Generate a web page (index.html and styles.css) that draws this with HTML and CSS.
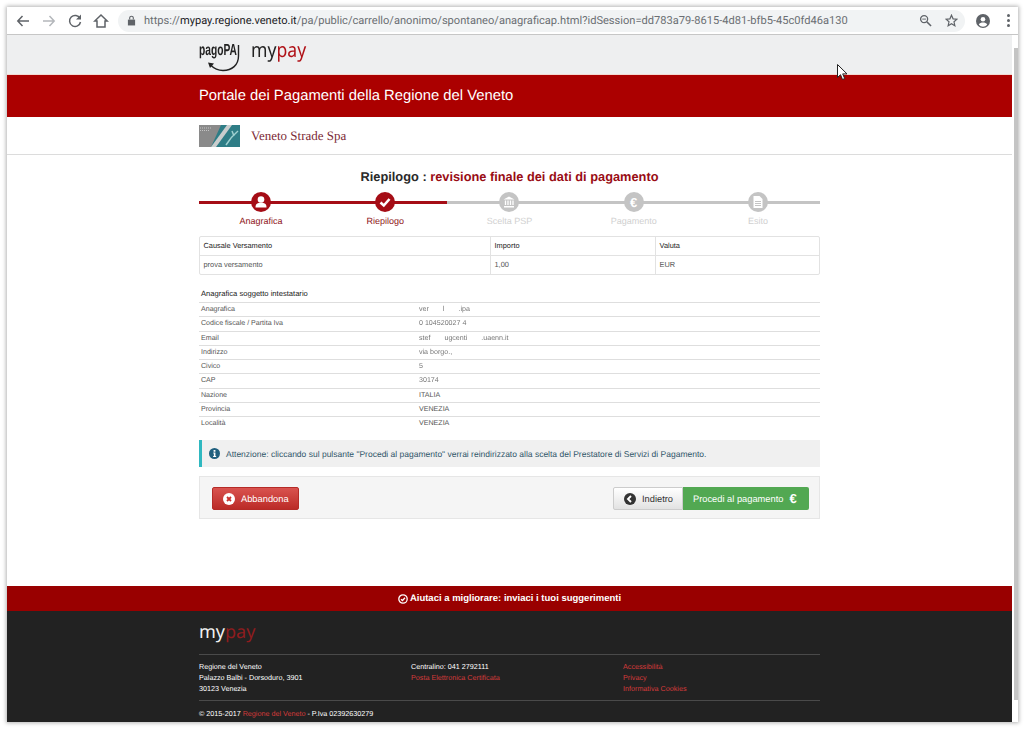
FILE: index.html
```html
<!DOCTYPE html>
<html lang="it">
<head>
  <meta charset="UTF-8">
  <meta name="viewport" content="width=device-width,initial-scale=1.0">
  <title>MyPay - Riepilogo</title>
  <link rel="stylesheet" href="styles.css">
</head>
<body>

<div class="window">

  <!-- barra del browser -->
  <div class="toolbar">
    <svg class="tb-icon" viewBox="0 0 16 16"><path d="M14 8H3M7.500 3 2.800 8l4.700 5" fill="none" stroke="#5f6368" stroke-width="1.500"/></svg>
    <svg class="tb-icon" viewBox="0 0 16 16"><path d="M2 8h11M8.500 3l4.700 5-4.700 5" fill="none" stroke="#b4b7bb" stroke-width="1.500"/></svg>
    <svg class="tb-icon" viewBox="0 0 16 16"><path d="M13 5.500A5.500 5.500 0 1 0 13.500 9" fill="none" stroke="#5f6368" stroke-width="1.500"/><path d="M14 1.500v5H9z" fill="#5f6368"/></svg>
    <svg class="tb-icon" viewBox="0 0 16 16"><path d="M8 2 1.800 8H4v6h8V8h2.200z" fill="none" stroke="#5f6368" stroke-width="1.500"/></svg>
    <div class="omnibox">
      <svg class="lock" viewBox="0 0 10 12"><path d="M1 5h8v6.500H1z" fill="#5f6368"/><path d="M3 5V3.200a2 2 0 0 1 4 0V5" fill="none" stroke="#5f6368" stroke-width="1.200"/></svg>
      <div class="url">https://<b>mypay.regione.veneto.it</b>/pa/public/carrello/anonimo/spontaneo/anagraficap.html?idSession=dd783a79-8615-4d81-bfb5-45c0fd46a130</div>
      <svg class="om-icon" viewBox="0 0 14 14"><circle cx="5.500" cy="5.500" r="3.800" fill="none" stroke="#5f6368" stroke-width="1.400"/><path d="M8.500 8.500 13 13" stroke="#5f6368" stroke-width="1.600"/><path d="M3.500 5.500h4" stroke="#5f6368"/></svg>
      <svg class="om-icon star" viewBox="0 0 14 14"><path d="M7 1.300 8.700 5.200l4.200.4-3.200 2.800.9 4.200L7 10.400l-3.600 2.200.9-4.200L1.100 5.600l4.200-.4z" fill="none" stroke="#5f6368" stroke-width="1.300"/></svg>
    </div>
    <svg class="avatar" viewBox="0 0 14 14"><circle cx="7" cy="7" r="7" fill="#5f6368"/><circle cx="7" cy="5.200" r="2.300" fill="#fff"/><path d="M2.800 10.800C3.500 9 5.500 8.600 7 8.600s3.500.4 4.200 2.200A5.600 5.600 0 0 1 7 12.700a5.600 5.600 0 0 1-4.200-1.900z" fill="#fff"/></svg>
    <div class="dots"><i></i><i></i><i></i></div>
  </div>

  <div class="viewport">
    <div class="page">

      <header class="logo-band">
        <div class="wrap logo-row">
          <div class="logo-pagopa">
            <span class="pagopa-text">pagoPA</span>
            <svg class="pagopa-arc" viewBox="0 0 42 31">
              <path d="M11.500 24C15 27.500 19 29.500 24 29.500C33 29.500 39.500 24 39.500 15V4" fill="none" stroke="#222" stroke-width="1.400"/>
              <path d="M9 21.500 15 22.500 11 27z" fill="#222"/>
            </svg>
          </div>
          <div class="logo-mypay"><span class="my">my</span><span class="pay">pay</span></div>
        </div>
      </header>

      <div class="title-band">
        <div class="wrap">Portale dei Pagamenti della Regione del Veneto</div>
      </div>

      <div class="ente-band">
        <div class="wrap ente-row">
          <svg class="ente-logo" viewBox="0 0 41 22">
            <rect width="41" height="22" fill="#8a8a8a"/>
            <path d="M22 0h19v22H12z" fill="#2e7d86"/>
            <path d="M12 22 28 0h5L17 22z" fill="#c9cdcd"/>
            <path d="M1 3h11M1 5.500h9" stroke="#c4c4c4" stroke-width="1" stroke-dasharray="1 1"/>
            <path d="M27 20c3-5 6-9 12-14M33 6l2 5" stroke="#9fd0d0" stroke-width="1.500" fill="none"/>
          </svg>
          <span class="ente-name">Veneto Strade Spa</span>
        </div>
      </div>

      <main class="main">
        <div class="wrap">

          <h2 class="page-title">Riepilogo : <span>revisione finale dei dati di pagamento</span></h2>

          <div class="steps">
            <div class="step done">
              <span class="step-dot">
                <svg viewBox="0 0 20 20"><circle cx="10" cy="7.500" r="3.300" fill="#fff"/><path d="M4.500 15.500c0-4 2-4.800 5.500-4.800s5.500.8 5.500 4.800z" fill="#fff"/></svg>
              </span>
              <div class="step-label">Anagrafica</div>
            </div>
            <div class="step done">
              <span class="step-dot">
                <svg viewBox="0 0 20 20"><path d="M5.500 10.500 8.800 13.500 14.500 7" fill="none" stroke="#fff" stroke-width="2.600"/></svg>
              </span>
              <div class="step-label">Riepilogo</div>
            </div>
            <div class="step">
              <span class="step-dot">
                <svg viewBox="0 0 20 20"><path d="M10 4.500 15.500 7.500h-11zM5 14h10v1.500H5z" fill="#fff"/><path d="M6.500 8.500v4.500M9 8.500v4.500M11.500 8.500v4.500M14 8.500v4.500" stroke="#fff" stroke-width="1.300"/></svg>
              </span>
              <div class="step-label">Scelta PSP</div>
            </div>
            <div class="step">
              <span class="step-dot euro">€</span>
              <div class="step-label">Pagamento</div>
            </div>
            <div class="step">
              <span class="step-dot">
                <svg viewBox="0 0 20 20"><path d="M5.500 4h6l3 3v9h-9z" fill="#fff"/><path d="M7 9.500h6M7 11.500h6M7 13.500h6" stroke="#c4c4c4"/></svg>
              </span>
              <div class="step-label">Esito</div>
            </div>
          </div>

          <table class="cart">
            <tr>
              <th class="col-causale">Causale Versamento</th>
              <th class="col-importo">Importo</th>
              <th>Valuta</th>
            </tr>
            <tr>
              <td>prova versamento</td>
              <td>1,00</td>
              <td>EUR</td>
            </tr>
          </table>

          <h3 class="section-title">Anagrafica soggetto intestatario</h3>
          <div class="data-rows">
            <div class="data-row"><span>Anagrafica</span><span class="redact">ver<em></em>l<em></em>.ipa</span></div>
            <div class="data-row"><span>Codice fiscale / Partita Iva</span><span class="redact">0 104520027 4</span></div>
            <div class="data-row"><span>Email</span><span class="redact">stef<em></em>ugcenti<em></em>.uaenn.it</span></div>
            <div class="data-row"><span>Indirizzo</span><span class="redact">via borgo.,</span></div>
            <div class="data-row"><span>Civico</span><span class="redact">5</span></div>
            <div class="data-row"><span>CAP</span><span class="redact">30174</span></div>
            <div class="data-row"><span>Nazione</span><span>ITALIA</span></div>
            <div class="data-row"><span>Provincia</span><span>VENEZIA</span></div>
            <div class="data-row"><span>Località</span><span>VENEZIA</span></div>
          </div>

          <div class="alert">
            <svg class="alert-icon" viewBox="0 0 12 12"><circle cx="6" cy="6" r="6" fill="#1f5f7e"/><path d="M5 2.300h2v1.800H5zM4.600 5h2.400v3.700h.8v1H4.500v-1h.8V6h-.7z" fill="#fff"/></svg>
            <span>Attenzione: cliccando sul pulsante "Procedi al pagamento" verrai reindirizzato alla scelta del Prestatore di Servizi di Pagamento.</span>
          </div>

          <div class="actions">
            <a class="btn btn-danger">
              <svg viewBox="0 0 12 12"><circle cx="6" cy="6" r="6" fill="#fff"/><path d="M4 4l4 4M8 4l-4 4" stroke="#c9302c" stroke-width="1.800"/></svg>
              Abbandona
            </a>
            <div class="btn-group">
              <a class="btn btn-default">
                <svg viewBox="0 0 12 12"><circle cx="6" cy="6" r="6" fill="#333"/><path d="M7 3 4 6l3 3" fill="none" stroke="#fff" stroke-width="1.900"/></svg>
                Indietro
              </a>
              <a class="btn btn-success">Procedi al pagamento <span class="btn-euro">€</span></a>
            </div>
          </div>

        </div>
      </main>

      <div class="feedback-band">
        <svg viewBox="0 0 10 10"><circle cx="5" cy="5" r="4.200" fill="none" stroke="#fff" stroke-width="1.300"/><path d="M3 5.200 4.500 6.500 7 3.800" fill="none" stroke="#fff" stroke-width="1.300"/></svg>
        Aiutaci a migliorare: inviaci i tuoi suggerimenti
      </div>

      <footer class="footer">
        <div class="wrap">
          <div class="footer-logo"><span class="my">my</span><span class="pay">pay</span></div>
          <div class="footer-cols">
            <div>
              <div>Regione del Veneto</div>
              <div>Palazzo Balbi - Dorsoduro, 3901</div>
              <div>30123 Venezia</div>
            </div>
            <div>
              <div>Centralino: 041 2792111</div>
              <div><a>Posta Elettronica Certificata</a></div>
            </div>
            <div>
              <div><a>Accessibilità</a></div>
              <div><a>Privacy</a></div>
              <div><a>Informativa Cookies</a></div>
            </div>
          </div>
          <div class="footer-copy">© 2015-2017 <a>Regione del Veneto</a> - P.Iva 02392630279</div>
        </div>
      </footer>

    </div>
    <div class="scrollbar"></div>
  </div>
</div>

<svg class="cursor" viewBox="0 0 12 17"><path d="M.5.500v13l3-2.800 2 4.800 2.200-1-2-4.600h4.300z" fill="#fff" stroke="#222"/></svg>

</body>
</html>
```

FILE: styles.css
```css
html, body {
  margin: 0;
  height: 730px;
  overflow: hidden;
  background: #fff;
}
body {
  font-family: "Liberation Sans", Arial, sans-serif;
  color: #333;
  text-rendering: geometricPrecision;
}
.window {
  position: relative;
  margin: 7px 6px 0 7px;
  height: 715px;
  display: flex;
  flex-direction: column;
  box-shadow: 0 0 4px 1px #b4b4b4;
  background: #fff;
}

/* browser */
.toolbar {
  height: 27px;
  flex: none;
  display: flex;
  align-items: center;
  padding-left: 8px;
  background: #fff;
  border-bottom: 1px solid #c6c6c6;
}
.tb-icon {
  width: 16px;
  height: 16px;
  margin-right: 10px;
}
.omnibox {
  margin-left: -1px;
  width: 847px;
  height: 22px;
  border-radius: 11px;
  background: #f1f3f4;
  display: flex;
  align-items: center;
  padding-left: 9px;
  box-sizing: border-box;
}
.lock {
  width: 9px;
  height: 11px;
  margin-right: 8px;
}
.url {
  font-family: Roboto, sans-serif;
  font-size: 11.100px;
  color: #6b6f73;
  white-space: nowrap;
  width: 775px;
}
.url b {
  font-weight: normal;
  color: #202124;
}
.om-icon {
  width: 13px;
  height: 13px;
}
.star {
  margin-left: 13px;
}
.avatar {
  width: 14px;
  height: 14px;
  margin-left: 11px;
}
.dots {
  margin-left: 17px;
  display: flex;
  flex-direction: column;
  gap: 2px;
}
.dots i {
  width: 3px;
  height: 3px;
  border-radius: 50%;
  background: #5f6368;
}

.viewport {
  flex: 1;
  display: flex;
  min-height: 0;
}
.page {
  width: 1005px;
  display: flex;
  flex-direction: column;
}
.scrollbar {
  width: 4px;
  margin: 13px 0 22px 2px;
  background: #c4c4c4;
}
.wrap {
  width: 621px;
  margin: 0 auto;
}

/* header */
.logo-band {
  height: 39px;
  background: #eeeff0;
  border-bottom: 1px solid #f3d9d2;
  flex: none;
}
.logo-row {
  display: flex;
  align-items: flex-start;
}
.logo-pagopa {
  position: relative;
  width: 42px;
  height: 36px;
}
.pagopa-text {
  display: inline-block;
  margin-top: 7px;
  font-weight: bold;
  font-size: 16px;
  line-height: 18px;
  color: #222;
  transform: scaleX(0.640);
  transform-origin: left;
}
.pagopa-arc {
  position: absolute;
  left: 0;
  top: 6px;
  width: 42px;
  height: 31px;
}
.logo-mypay, .footer-logo {
  font-family: "Noto Sans", sans-serif;
}
.logo-mypay {
  margin-left: 10px;
  padding-top: 1px;
  font-size: 20px;
  line-height: 27px;
  transform: scaleX(0.880);
  transform-origin: left;
  white-space: nowrap;
}
.logo-mypay .my { color: #222; }
.logo-mypay .pay { color: #b01218; }

.title-band {
  height: 42px;
  flex: none;
  background: #ab0000;
  color: #fff;
  font-size: 14.800px;
  line-height: 42px;
}
.ente-band {
  height: 37px;
  flex: none;
  background: #fff;
  border-bottom: 1px solid #dcdcdc;
}
.ente-row {
  display: flex;
  align-items: center;
  height: 37px;
}
.ente-logo {
  width: 41px;
  height: 22px;
}
.ente-name {
  margin-left: 11px;
  font-family: "Liberation Serif", serif;
  font-size: 13px;
  color: #7c2a36;
}

/* contenuto */
.main {
  flex: 1;
  background: #fff;
}
.page-title {
  margin: 12px 0 5px;
  font-size: 12.800px;
  line-height: 20px;
  font-weight: bold;
  text-align: center;
  color: #2a2a2a;
}
.page-title span {
  color: #990d15;
}
.steps {
  display: grid;
  grid-template-columns: repeat(5, 1fr);
  background: linear-gradient(to right, #a50d16 40%, #c4c4c4 40%) 0 9px / 100% 3px no-repeat;
}
.step {
  display: flex;
  flex-direction: column;
  align-items: center;
}
.step-dot {
  width: 20px;
  height: 20px;
  border-radius: 50%;
  background: #c4c4c4;
  display: flex;
  align-items: center;
  justify-content: center;
  color: #fff;
}
.step-dot svg {
  width: 20px;
  height: 20px;
}
.euro {
  font-size: 13px;
  font-weight: bold;
}
.step-label {
  margin-top: 3px;
  font-size: 9px;
  line-height: 13px;
  text-align: center;
  color: #d0d0d0;
}
.step.done .step-dot {
  background: #a50d16;
}
.step.done .step-label {
  color: #8f1620;
}

.cart {
  width: 100%;
  margin-top: 8px;
  border-collapse: separate;
  border-spacing: 0;
  border: 1px solid #e2e2e2;
  border-radius: 2px;
  font-size: 7.400px;
}
.cart th, .cart td {
  text-align: left;
  font-weight: normal;
  vertical-align: top;
  padding: 0 3.500px;
  height: 18px;
  line-height: 17px;
}
.cart th {
  color: #222;
  border-bottom: 1px solid #e2e2e2;
}
.cart td {
  color: #555;
}
.cart th + th, .cart td + td {
  border-left: 1px solid #e2e2e2;
}
.col-causale { width: 283px; }
.col-importo { width: 157px; }

.section-title {
  margin: 13px 0 0;
  padding: 0 0 2px 2px;
  font-size: 7.600px;
  line-height: 12px;
  font-weight: normal;
  color: #222;
}
.data-row {
  height: 14.250px;
  box-sizing: border-box;
  border-top: 1px solid #dedede;
  display: grid;
  grid-template-columns: 218px 1fr;
  padding-left: 2px;
  font-size: 7.100px;
  line-height: 12px;
  color: #555;
}
.redact {
  color: #777;
  filter: blur(0.400px);
}
.redact em {
  display: inline-block;
  width: 14px;
}

.alert {
  margin-top: 10px;
  height: 27px;
  box-sizing: border-box;
  border-left: 3px solid #2fb8c0;
  background: #f0f0f0;
  display: flex;
  align-items: center;
  padding-left: 7px;
  font-size: 8.500px;
  color: #31566a;
}
.alert-icon {
  width: 11px;
  height: 11px;
  margin-right: 6px;
}

.actions {
  margin-top: 9px;
  height: 43px;
  box-sizing: border-box;
  background: #f5f5f5;
  border: 1px solid #e6e6e6;
  display: flex;
  justify-content: space-between;
  align-items: center;
  padding: 2px 10px 0 12px;
}
.btn-group {
  display: flex;
}
.btn {
  height: 23px;
  box-sizing: border-box;
  display: flex;
  align-items: center;
  gap: 6px;
  font-size: 9.300px;
  border-radius: 2px;
}
.btn svg {
  width: 12px;
  height: 12px;
}
.btn-danger {
  width: 87px;
  padding-left: 10px;
  color: #fff;
  background: linear-gradient(#d9534f, #bb2b27);
  border: 1px solid #b52b27;
}
.btn-default {
  width: 70px;
  padding-left: 10px;
  color: #333;
  background: linear-gradient(#fff, #e2e2e2);
  border: 1px solid #ccc;
  border-radius: 2px 0 0 2px;
}
.btn-success {
  width: 126px;
  padding-left: 10px;
  color: #fff;
  background: #52a852;
  border-radius: 0 2px 2px 0;
}
.btn-euro {
  font-size: 13px;
  font-weight: bold;
}

/* footer */
.feedback-band {
  height: 25px;
  flex: none;
  background: #990000;
  color: #fff;
  font-size: 9.500px;
  font-weight: bold;
  display: flex;
  align-items: center;
  justify-content: center;
  gap: 2px;
}
.feedback-band svg {
  width: 10px;
  height: 10px;
}
.footer {
  height: 111px;
  flex: none;
  background: #222;
  color: #fff;
  font-size: 7.200px;
  line-height: 11px;
}
.footer a {
  color: #d43a3a;
}
.footer-logo {
  height: 44px;
  box-sizing: border-box;
  padding-top: 8px;
  font-size: 18px;
  line-height: 27px;
  border-bottom: 1px solid #4a4a4a;
}
.footer-logo .my { color: #f2f2f2; }
.footer-logo .pay { color: #8f1c1e; }
.footer-cols {
  display: grid;
  grid-template-columns: repeat(3, 212px);
  padding-top: 6px;
  height: 46px;
  box-sizing: border-box;
  border-bottom: 1px solid #4a4a4a;
}
.footer-copy {
  margin-top: 7px;
}

.cursor {
  position: absolute;
  left: 837px;
  top: 64px;
  width: 12px;
  height: 17px;
}
```
